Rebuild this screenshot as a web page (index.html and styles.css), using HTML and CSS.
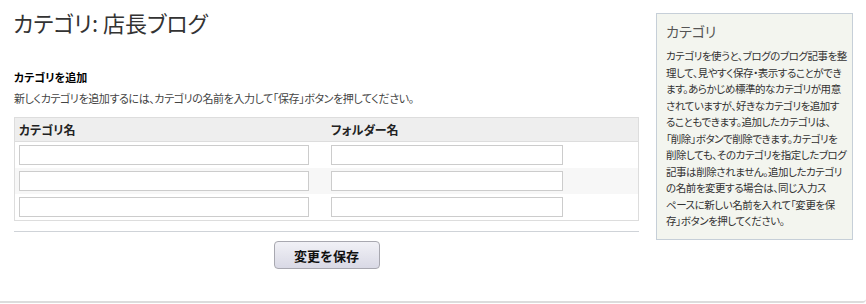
FILE: index.html
```html
<!DOCTYPE html>
<html>
<head>
    <title>カテゴリ: 店長ブログ</title>
    <link rel="stylesheet" href="styles.css">
</head>
<body>
    <div class="page">
        <main class="main">
            <h1 class="title">カテゴリ: 店長ブログ</h1>
            <h3 class="section-title">カテゴリを追加</h3>
            <p class="desc">新しくカテゴリを追加するには、カテゴリの名前を入力して「保存」ボタンを押してください。</p>
            <table class="cat-table">
                <tr>
                    <th class="col-name">カテゴリ名</th>
                    <th>フォルダー名</th>
                </tr>
                <tr>
                    <td><input type="text" class="in-name"></td>
                    <td><input type="text" class="in-folder"></td>
                </tr>
                <tr class="alt">
                    <td><input type="text" class="in-name"></td>
                    <td><input type="text" class="in-folder"></td>
                </tr>
                <tr>
                    <td><input type="text" class="in-name"></td>
                    <td><input type="text" class="in-folder"></td>
                </tr>
            </table>
            <div class="actions">
                <button class="save-btn">変更を保存</button>
            </div>
        </main>
        <aside class="help">
            <h2 class="help-title">カテゴリ</h2>
            <p class="help-text">カテゴリを使うと、ブログのブログ記事を整<br>理して、見やすく保存・表示することができ<br>ます。あらかじめ標準的なカテゴリが用意<br>されていますが、好きなカテゴリを追加す<br>ることもできます。追加したカテゴリは、<br>「削除」ボタンで削除できます。カテゴリを<br>削除しても、そのカテゴリを指定したブログ<br>記事は削除されません。追加したカテゴリ<br>の名前を変更する場合は、同じ入力ス<br>ペースに新しい名前を入れて「変更を保<br>存」ボタンを押してください。</p>
        </aside>
    </div>
</body>
</html>
```

FILE: styles.css
```css
body {
    margin: 0;
    font-family: "Noto Sans CJK JP", "Noto Sans", sans-serif;
    background-color: #ffffff;
    color: #333;
}
.page {
    display: flex;
    gap: 17px;
    height: 293px;
    padding: 8px 13px 0 14px;
    border-bottom: 2px solid #dcdcdc;
    border-bottom-right-radius: 4px;
    font-feature-settings: "palt";
}
.main {
    width: 625px;
}
.title {
    margin: 0 0 0 -1px;
    font-size: 22px;
    line-height: 28px;
    font-weight: normal;
    color: #333;
}
.section-title {
    margin: 33px 0 0 0;
    font-size: 11px;
    line-height: 16px;
    font-weight: bold;
    color: #000;
}
.desc {
    margin: 5px 0 0 0;
    font-size: 11px;
    line-height: 16px;
    letter-spacing: -0.4px;
    color: #444;
}
.cat-table {
    margin-top: 11px;
    width: 100%;
    border-collapse: collapse;
    border: 1px solid #dddddd;
}
.cat-table th {
    height: 23px;
    padding: 0 4px;
    background-color: #eeeeee;
    border-bottom: 1px solid #dddddd;
    text-align: left;
    font-size: 12px;
    color: #222;
}
.cat-table .col-name {
    width: 304px;
}
.cat-table td {
    padding: 3px 4px;
    height: 20px;
}
.cat-table .alt td {
    background-color: #f7f7f7;
}
.cat-table input {
    display: block;
    box-sizing: border-box;
    height: 20px;
    margin: 0;
    padding: 1px 3px;
    border: 1px solid #cccccc;
    background-color: #fff;
}
.in-name {
    width: 290px;
}
.in-folder {
    width: 232px;
}
.actions {
    margin-top: 10px;
    padding-top: 9px;
    border-top: 1px solid #cfd3d8;
    text-align: center;
}
.save-btn {
    width: 106px;
    height: 28px;
    border: 1px solid #a8a8b0;
    border-radius: 4px;
    background: linear-gradient(#f1f1f6, #d9d9e5);
    font-family: "Noto Sans CJK JP", sans-serif;
    font-size: 13px;
    font-weight: bold;
    color: #111;
    cursor: pointer;
}
.help {
    box-sizing: border-box;
    width: 197px;
    height: 227px;
    margin-top: 5px;
    padding: 6px 8px 0 9px;
    background-color: #f3f5ef;
    border: 1px solid #c6cfd8;
}
.help-title {
    margin: 0;
    font-size: 14px;
    line-height: 22px;
    font-weight: normal;
    color: #555;
}
.help-text {
    margin: 6px 0 0 0;
    font-size: 10.5px;
    line-height: 16.5px;
    letter-spacing: -0.45px;
    color: #333;
    white-space: nowrap;
}
```
